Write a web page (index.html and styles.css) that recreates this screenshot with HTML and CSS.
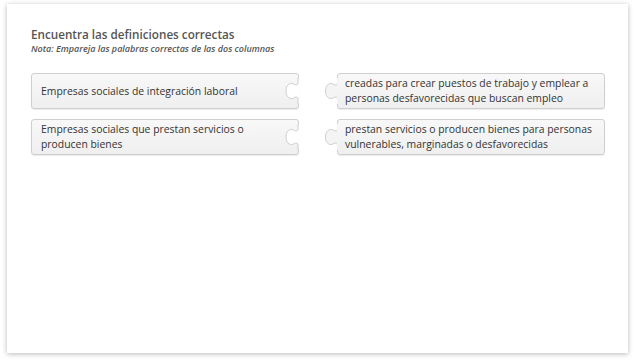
FILE: index.html
```html
<!DOCTYPE html>
<html lang="es">
<head>
<meta charset="utf-8">
<link rel="stylesheet" href="styles.css">
</head>
<body>
<div class="card">
  <h1 class="title">Encuentra las definiciones correctas</h1>
  <p class="note">Nota: Empareja las palabras correctas de las dos columnas</p>
  <div class="grid">
    <div class="piece left">
      <span>Empresas sociales de integración laboral</span>
      <svg class="notch" width="14" height="26" viewBox="0 0 14 26"><path d="M14 0.5 H13 V5 C13 7 11 7.5 9.5 6.5 C6 4 1 6 1 13 C1 20 6 22 9.5 19.5 C11 18.5 13 19 13 21 V25.5 H14 Z" fill="#fff"/><path d="M13 0 V5 C13 7 11 7.5 9.5 6.5 C6 4 1 6 1 13 C1 20 6 22 9.5 19.5 C11 18.5 13 19 13 21 V26" fill="none" stroke="#cfcfcf" stroke-width="1"/></svg>
    </div>
    <div class="piece right">
      <svg class="tab" width="14" height="26" viewBox="0 0 14 26"><path d="M13.5 0 V5 C13.5 7 11.5 7.5 10 6.5 C6.5 4 1.5 6 1.5 13 C1.5 20 6.5 22 10 19.5 C11.5 18.5 13.5 19 13.5 21 V26" fill="#f4f4f4" stroke="#cfcfcf" stroke-width="1"/><rect x="13" y="0" width="2" height="26" fill="#f4f4f4"/></svg>
      <span>creadas para crear puestos de trabajo y emplear a personas desfavorecidas que buscan empleo</span>
    </div>
    <div class="piece left">
      <span>Empresas sociales que prestan servicios o producen bienes</span>
      <svg class="notch" width="14" height="26" viewBox="0 0 14 26"><path d="M14 0.5 H13 V5 C13 7 11 7.5 9.5 6.5 C6 4 1 6 1 13 C1 20 6 22 9.5 19.5 C11 18.5 13 19 13 21 V25.5 H14 Z" fill="#fff"/><path d="M13 0 V5 C13 7 11 7.5 9.5 6.5 C6 4 1 6 1 13 C1 20 6 22 9.5 19.5 C11 18.5 13 19 13 21 V26" fill="none" stroke="#cfcfcf" stroke-width="1"/></svg>
    </div>
    <div class="piece right">
      <svg class="tab" width="14" height="26" viewBox="0 0 14 26"><path d="M13.5 0 V5 C13.5 7 11.5 7.5 10 6.5 C6.5 4 1.5 6 1.5 13 C1.5 20 6.5 22 10 19.5 C11.5 18.5 13.5 19 13.5 21 V26" fill="#f4f4f4" stroke="#cfcfcf" stroke-width="1"/><rect x="13" y="0" width="2" height="26" fill="#f4f4f4"/></svg>
      <span>prestan servicios o producen bienes para personas vulnerables, marginadas o desfavorecidas</span>
    </div>
  </div>
</div>
</body>
</html>
```

FILE: styles.css
```css
* { box-sizing: border-box; }
html, body { margin: 0; padding: 0; background: #fff; }
body {
  width: 636px;
  height: 364px;
  padding: 4px 8px 0 7px;
  font-family: "Open Sans", "Liberation Sans", sans-serif;
}
.card {
  width: 621px;
  height: 349px;
  background: #fff;
  box-shadow: 0 1px 5px rgba(0,0,0,0.28);
  padding: 21px 24px 0 24px;
}
.title {
  margin: 0;
  font-size: 11.7px;
  line-height: 18px;
  font-weight: 600;
  color: #555;
}
.note {
  margin: 0;
  font-size: 9px;
  line-height: 12px;
  font-style: italic;
  font-weight: 600;
  color: #555;
}
.grid {
  margin-top: 18px;
  display: grid;
  grid-template-columns: 268px 268px;
  column-gap: 38px;
  row-gap: 10px;
}
.piece {
  position: relative;
  height: 36px;
  border: 1px solid #cfcfcf;
  border-radius: 3px;
  background: linear-gradient(#f8f8f8, #efefef);
  box-shadow: 0 1px 1px rgba(0,0,0,0.08);
  display: flex;
  align-items: center;
  font-size: 10.4px;
  line-height: 15px;
  color: #333;
}
.piece.left { padding: 0 40px 0 9px; }
.piece.right { padding: 0 8px 0 7px; }
.notch {
  position: absolute;
  right: -1px;
  top: 4px;
}
.tab {
  position: absolute;
  left: -14px;
  top: 4px;
}
```
